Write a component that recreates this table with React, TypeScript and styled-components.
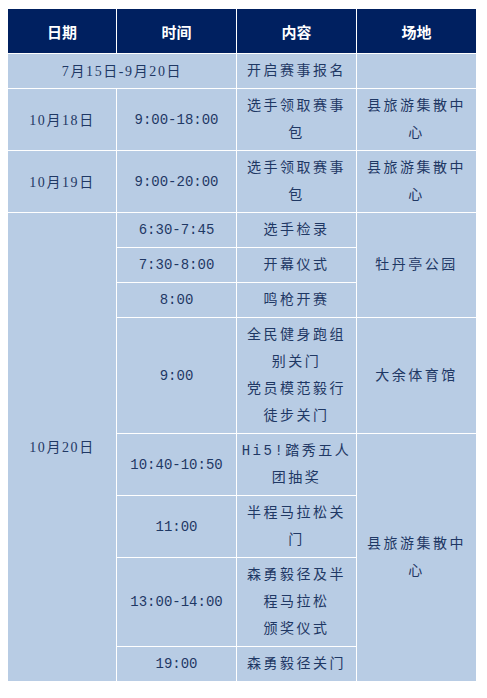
import React from "react";
import styled, { createGlobalStyle } from "styled-components";

const GlobalStyle = createGlobalStyle`
  html, body {
    margin: 0;
    padding: 0;
    background: #ffffff;
  }
`;

const Page = styled.div`
  padding: 9px 7px;
`;

const Table = styled.table`
  border-collapse: collapse;
  table-layout: fixed;
  width: 469px;
  background: #b8cce4;
`;

const HeadCell = styled.th`
  height: 44px;
  padding: 0;
  background: #002060;
  color: #ffffff;
  font-family: "Noto Sans CJK SC", "Liberation Sans", sans-serif;
  font-size: 15px;
  font-weight: 700;
  text-align: center;
  border: 1px solid #ffffff;
  border-top: none;
`;

type Kind = "date" | "time" | "text";

const Cell = styled.td<{ $kind: Kind }>`
  padding: 4px 4px 3px;
  border: 1px solid #ffffff;
  text-align: center;
  vertical-align: middle;
  color: #1f3864;
  font-size: 14px;
  line-height: 27px;
  white-space: nowrap;
  font-family: ${(p) =>
    p.$kind === "time"
      ? `"Liberation Mono", "Noto Sans CJK SC", monospace`
      : p.$kind === "date"
      ? `"Liberation Serif", "Noto Sans CJK SC", serif`
      : `"Liberation Mono", "Noto Sans CJK SC", sans-serif`};
  letter-spacing: ${(p) =>
    p.$kind === "time" ? "0" : p.$kind === "date" ? "1.6px" : "2.5px"};
`;

const Lines: React.FC<{ text: string[] }> = ({ text }) => (
  <>
    {text.map((line, i) => (
      <React.Fragment key={i}>
        {i > 0 && <br />}
        {line}
      </React.Fragment>
    ))}
  </>
);

const App: React.FC = () => (
  <Page>
    <GlobalStyle />
    <Table>
      <colgroup>
        <col style={{ width: 109 }} />
        <col style={{ width: 120 }} />
        <col style={{ width: 120 }} />
        <col style={{ width: 120 }} />
      </colgroup>
      <thead>
        <tr>
          <HeadCell>日期</HeadCell>
          <HeadCell>时间</HeadCell>
          <HeadCell>内容</HeadCell>
          <HeadCell>场地</HeadCell>
        </tr>
      </thead>
      <tbody>
        <tr>
          <Cell $kind="date" colSpan={2}>
            7月15日-9月20日
          </Cell>
          <Cell $kind="text">开启赛事报名</Cell>
          <Cell $kind="text" />
        </tr>
        <tr>
          <Cell $kind="date">10月18日</Cell>
          <Cell $kind="time">9:00-18:00</Cell>
          <Cell $kind="text">
            <Lines text={["选手领取赛事", "包"]} />
          </Cell>
          <Cell $kind="text">
            <Lines text={["县旅游集散中", "心"]} />
          </Cell>
        </tr>
        <tr>
          <Cell $kind="date">10月19日</Cell>
          <Cell $kind="time">9:00-20:00</Cell>
          <Cell $kind="text">
            <Lines text={["选手领取赛事", "包"]} />
          </Cell>
          <Cell $kind="text">
            <Lines text={["县旅游集散中", "心"]} />
          </Cell>
        </tr>
        <tr>
          <Cell $kind="date" rowSpan={8}>
            10月20日
          </Cell>
          <Cell $kind="time">6:30-7:45</Cell>
          <Cell $kind="text">选手检录</Cell>
          <Cell $kind="text" rowSpan={3}>
            牡丹亭公园
          </Cell>
        </tr>
        <tr>
          <Cell $kind="time">7:30-8:00</Cell>
          <Cell $kind="text">开幕仪式</Cell>
        </tr>
        <tr>
          <Cell $kind="time">8:00</Cell>
          <Cell $kind="text">鸣枪开赛</Cell>
        </tr>
        <tr>
          <Cell $kind="time">9:00</Cell>
          <Cell $kind="text">
            <Lines text={["全民健身跑组", "别关门", "党员模范毅行", "徒步关门"]} />
          </Cell>
          <Cell $kind="text">大余体育馆</Cell>
        </tr>
        <tr>
          <Cell $kind="time">10:40-10:50</Cell>
          <Cell $kind="text">
            <Lines text={["Hi5!踏秀五人", "团抽奖"]} />
          </Cell>
          <Cell $kind="text" rowSpan={4}>
            <Lines text={["县旅游集散中", "心"]} />
          </Cell>
        </tr>
        <tr>
          <Cell $kind="time">11:00</Cell>
          <Cell $kind="text">
            <Lines text={["半程马拉松关", "门"]} />
          </Cell>
        </tr>
        <tr>
          <Cell $kind="time">13:00-14:00</Cell>
          <Cell $kind="text">
            <Lines text={["森勇毅径及半", "程马拉松", "颁奖仪式"]} />
          </Cell>
        </tr>
        <tr>
          <Cell $kind="time">19:00</Cell>
          <Cell $kind="text">森勇毅径关门</Cell>
        </tr>
      </tbody>
    </Table>
  </Page>
);

export default App;
